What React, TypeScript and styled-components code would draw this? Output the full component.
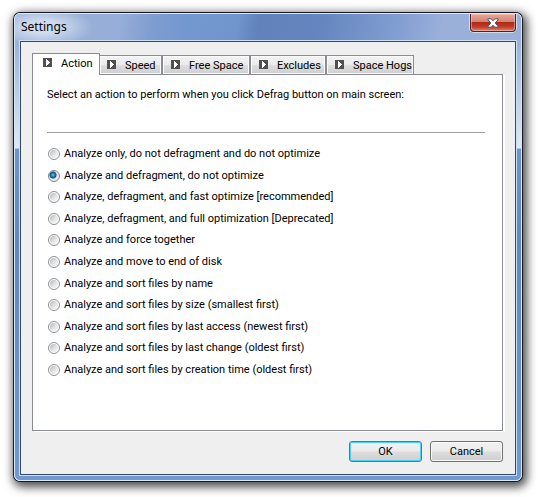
import React, { useState } from 'react';
import styled, { createGlobalStyle, css } from 'styled-components';

const GlobalStyle = createGlobalStyle`
  *, *::before, *::after { box-sizing: border-box; }
  body { margin: 0; background: #fff; }
`;

const Page = styled.div`
  display: flex;
  min-height: 100vh;
  padding: 13px 16px 16px 14px;
  font: 11px/14px Roboto, Tahoma, sans-serif;
  color: #000;
`;

const Dialog = styled.section`
  flex: 1;
  min-width: 0;
  display: flex;
  flex-direction: column;
  border: 1px solid #dce8f6;
  border-radius: 6px;
  background: linear-gradient(
    to bottom,
    #9bb3dc 0, #9bb3dc 30px, #dfe9f5 134px,
    #6f94cf 135px, #5f88c2 230px, #7198d2 100%
  );
  box-shadow: 0 0 0 1px #141a26, 2px 3px 10px 3px rgba(0, 0, 0, 0.7);
`;

const TitleBar = styled.header`
  display: flex;
  justify-content: space-between;
  align-items: flex-start;
  height: 27px;
  padding: 0 5px 0 6px;
  border-radius: 5px 5px 0 0;
  background:
    radial-gradient(ellipse 50px 20px at 28px 13px, rgba(226, 234, 246, 0.75) 30%, rgba(226, 234, 246, 0) 100%),
    linear-gradient(100deg, #9bb1d8 0, #96aed8 21%, #7f9dd0 27%, #7498d0 33%, #7094cc 44%, #6182ba 48%, #6485bf 60%, #839fd2 76%, #9ab0da 84%, #9bb1d9 100%);
`;

const Title = styled.h1`
  margin: 0;
  font: 12px/26px "Noto Sans", "Segoe UI", sans-serif;
`;

const CloseButton = styled.button`
  display: grid;
  place-items: center;
  width: 46px;
  height: 18px;
  margin: 0;
  padding: 0;
  border: 1px solid #48222e;
  border-top: 0;
  border-radius: 0 0 4px 4px;
  background: linear-gradient(to bottom, #e6a89d 0, #d48070 48%, #b02a18 50%, #bd3c28 75%, #d98671 100%);
  box-shadow: inset 0 0 0 1px rgba(255, 205, 195, 0.5), 0 0 0 1px rgba(220, 232, 246, 0.8);
`;

const Client = styled.main`
  flex: 1;
  display: flex;
  flex-direction: column;
  gap: 10px;
  margin: 0 5px 5px;
  padding: 11px 12px 12px 11px;
  border: 1px solid #31496c;
  box-shadow: 0 0 0 1px #cfdff2;
  background: #efefef;
`;

const TabView = styled.div`
  flex: 1;
  display: flex;
  flex-direction: column;
`;

const TabList = styled.div`
  display: flex;
  align-items: flex-end;
  position: relative;
`;

const Tab = styled.button<{ $active: boolean; $width: number }>`
  display: flex;
  align-items: flex-start;
  gap: 9px;
  width: ${(p) => p.$width}px;
  height: 19px;
  margin: 0;
  padding: 3px 0 0 8px;
  border: 1px solid #898c95;
  border-bottom: 0;
  border-radius: 0;
  background: linear-gradient(to bottom, #f3f3f3 0, #ebebeb 48%, #dedede 52%, #cfcfcf 100%);
  box-shadow: inset 0 0 0 1px #fbfbfb;
  font: inherit;
  color: inherit;
  white-space: nowrap;
  ${(p) =>
    p.$active &&
    css`
      height: 22px;
      margin-bottom: -1px;
      padding-left: 10px;
      background: #fff;
      box-shadow: none;
    `}
  [aria-selected='true'] + & {
    padding-left: 7px;
    border-left: 0;
  }
  svg {
    flex: none;
    margin-top: 1px;
  }
`;

const Panel = styled.div`
  flex: 1;
  padding: 13px 17px 52px 14px;
  border: 1px solid #898c95;
  background: #fff;
  box-shadow: 2px 1px 0 #fff;
`;

const Intro = styled.p`
  margin: 0;
  padding-bottom: 30px;
  border-bottom: 1px solid #a0a0a0;
`;

const Options = styled.fieldset`
  display: flex;
  flex-direction: column;
  justify-content: space-between;
  height: 230px;
  margin: 14px 0 0;
  padding: 0 0 0 1px;
  border: 0;
`;

const Option = styled.label`
  display: flex;
  align-items: center;
  gap: 4px;
`;

const Radio = styled.input`
  appearance: none;
  flex: none;
  width: 12px;
  height: 12px;
  margin: 0;
  border: 1px solid #8e8f8f;
  border-radius: 50%;
  background: linear-gradient(135deg, #b9bec3 10%, #dfe1e3 50%, #f6f6f6 90%) content-box #f4f4f4;
  padding: 1px;
  &:checked {
    border-color: #7d8790;
    background:
      radial-gradient(circle at 5px 5px, #8fdcf8 0, #2e9dcc 1px, #16557d 3px, #0c324f 3px, rgba(12, 50, 79, 0) 4px) border-box,
      #e4ebf0;
  }
`;

const Footer = styled.footer`
  display: flex;
  justify-content: flex-end;
  gap: 8px;
`;

const PushButton = styled.button<{ $primary?: boolean }>`
  width: 73px;
  height: 21px;
  margin: 0;
  padding: 0;
  border: 1px solid ${(p) => (p.$primary ? '#3c7fb1' : '#707070')};
  border-radius: 3px;
  background: linear-gradient(to bottom, #f2f2f2 0, #ebebeb 48%, #dddddd 52%, #cfcfcf 100%);
  box-shadow: ${(p) => (p.$primary ? 'inset 0 0 0 1px #48d2f8' : 'inset 0 0 0 1px #fafafa')};
  font: inherit;
  color: inherit;
`;

const ArrowIcon = () => (
  <svg width="9" height="9" viewBox="0 0 9 9" shapeRendering="crispEdges" aria-hidden="true">
    <rect width="9" height="9" fill="#505050" />
    <path d="M3 1h1v1h1v1h1v1h1v1h-1v1h-1v1h-1v1h-1z" fill="#fff" />
  </svg>
);

const CloseIcon = () => (
  <svg width="12" height="10" viewBox="0 0 12 10" aria-hidden="true">
    <path
      d="M1 .8h3.200L6 2.700 7.800.8H11v1L8.200 5 11 8.200v1H7.800L6 7.300 4.200 9.200H1v-1L3.800 5 1 1.800z"
      fill="#fff"
      stroke="#4d5066"
      strokeWidth="1"
    />
  </svg>
);

const tabs = [
  { name: 'Action', width: 68 },
  { name: 'Speed', width: 62 },
  { name: 'Free Space', width: 88 },
  { name: 'Excludes', width: 76 },
  { name: 'Space Hogs', width: 88 },
];

const actions = [
  'Analyze only, do not defragment and do not optimize',
  'Analyze and defragment, do not optimize',
  'Analyze, defragment, and fast optimize [recommended]',
  'Analyze, defragment, and full optimization [Deprecated]',
  'Analyze and force together',
  'Analyze and move to end of disk',
  'Analyze and sort files by name',
  'Analyze and sort files by size (smallest first)',
  'Analyze and sort files by last access (newest first)',
  'Analyze and sort files by last change (oldest first)',
  'Analyze and sort files by creation time (oldest first)',
];

export default function App() {
  const [selected, setSelected] = useState(1);

  return (
    <>
      <GlobalStyle />
      <Page>
        <Dialog role="dialog" aria-labelledby="dialog-title">
          <TitleBar>
            <Title id="dialog-title">Settings</Title>
            <CloseButton type="button" aria-label="Close">
              <CloseIcon />
            </CloseButton>
          </TitleBar>
          <Client>
            <TabView>
              <TabList role="tablist">
                {tabs.map((tab, i) => (
                  <Tab
                    key={tab.name}
                    type="button"
                    role="tab"
                    id={`tab-${i}`}
                    aria-selected={i === 0}
                    $active={i === 0}
                    $width={tab.width}
                  >
                    <ArrowIcon />
                    {tab.name}
                  </Tab>
                ))}
              </TabList>
              <Panel role="tabpanel" aria-labelledby="tab-0">
                <Intro id="intro">Select an action to perform when you click Defrag button on main screen:</Intro>
                <Options aria-labelledby="intro">
                  {actions.map((label, i) => (
                    <Option key={label}>
                      <Radio
                        type="radio"
                        name="action"
                        checked={selected === i}
                        onChange={() => setSelected(i)}
                      />
                      {label}
                    </Option>
                  ))}
                </Options>
              </Panel>
            </TabView>
            <Footer>
              <PushButton type="button" $primary>OK</PushButton>
              <PushButton type="button">Cancel</PushButton>
            </Footer>
          </Client>
        </Dialog>
      </Page>
    </>
  );
}
